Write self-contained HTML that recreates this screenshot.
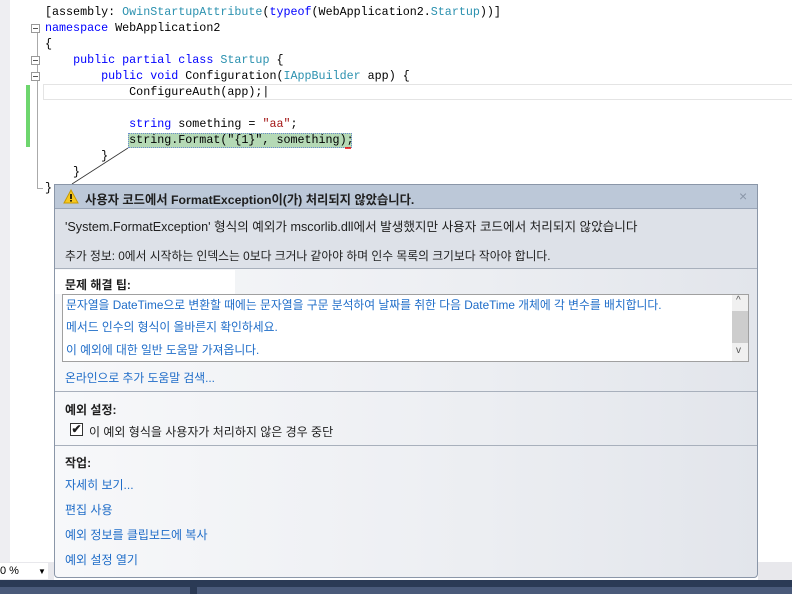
<!DOCTYPE html>
<html><head><meta charset="utf-8"><style>
*{margin:0;padding:0;box-sizing:border-box}
body{width:792px;height:594px;overflow:hidden;background:#fff;position:relative;font-family:"Liberation Sans","Noto Sans CJK KR",sans-serif}
.code{position:absolute;font-family:"Liberation Mono",monospace;font-size:11.7px;line-height:16px;white-space:pre;color:#000}
.k{color:#0000ff}.t{color:#2b91af}.s{color:#a31515}
.fold{position:absolute;width:9px;height:9px;border:1px solid #999;background:#fff;left:31px}
.fold:after{content:"";position:absolute;left:1px;top:3px;width:5px;height:1px;background:#555}
.dlg{position:absolute;left:54px;top:184px;width:704px;height:394px;border:1px solid #8a96a8;border-radius:0 0 4px 4px;background:linear-gradient(90deg,#f7f8fa,#eceef2 60%,#e2e5eb);font-size:12px;color:#1e1e1e}
.lnk{color:#1e6cc8}
.a{position:absolute}
</style></head><body>
<div class="a" style="left:0;top:0;width:10px;height:562px;background:#eeeef2"></div>
<div class="a" style="left:26px;top:85px;width:4px;height:62px;background:#6ed66e"></div>
<div class="a" style="left:37px;top:33px;width:1px;height:155px;background:#aaa"></div>
<div class="a" style="left:37px;top:188px;width:6px;height:1px;background:#aaa"></div>
<div class="fold" style="top:24px"></div>
<div class="fold" style="top:56px"></div>
<div class="fold" style="top:72px"></div>
<div class="a" style="left:43px;top:84px;width:760px;height:16px;border:1px solid #e4e4e4"></div>
<div class="a" style="left:128px;top:133px;width:224px;height:15px;background:#b5d9b5;border:1px dotted #6a8ad0"></div>
<svg class="a" style="left:0;top:0" width="792" height="200"><line x1="128" y1="148" x2="72" y2="184" stroke="#333" stroke-width="0.8"/><line x1="345" y1="148" x2="351" y2="148" stroke="#e00" stroke-width="1.5"/></svg>
<div class="code" style="left:45px;top:4px">[assembly: <span class="t">OwinStartupAttribute</span>(<span class="k">typeof</span>(WebApplication2.<span class="t">Startup</span>))]
<span class="k">namespace</span> WebApplication2
{
    <span class="k">public partial class</span> <span class="t">Startup</span> {
        <span class="k">public void</span> Configuration(<span class="t">IAppBuilder</span> app) {
            ConfigureAuth(app);|

            <span class="k">string</span> something = <span class="s">"aa"</span>;
            string.Format("{1}", something);
        }
    }
}</div>
<div class="dlg">
 <div class="a" style="left:0;top:0;width:702px;height:24px;background:#bcc8d8;border-bottom:1px solid #9aa6b8"></div>
 <svg class="a" style="left:8px;top:4px" width="16" height="15"><path d="M8 1 L15 14 L1 14 Z" fill="#f7c81e" stroke="#c89a00"/><rect x="7.2" y="5" width="1.6" height="5" fill="#000"/><rect x="7.2" y="11" width="1.6" height="1.6" fill="#000"/></svg>
 <div class="a" style="left:30px;top:5px;font-weight:bold;font-size:12.3px">사용자 코드에서 FormatException이(가) 처리되지 않았습니다.</div>
 <div class="a" style="left:684px;top:3px;color:#8a96a8;font-size:14px">×</div>
 <div class="a" style="left:0;top:24px;width:702px;height:60px;background:#dde1e8;border-bottom:1px solid #a8b0bc"></div>
 <div class="a" style="left:10px;top:31px;font-size:12.6px">'System.FormatException' 형식의 예외가 mscorlib.dll에서 발생했지만 사용자 코드에서 처리되지 않았습니다</div>
 <div class="a" style="left:10px;top:62px;font-size:11.8px">추가 정보: 0에서 시작하는 인덱스는 0보다 크거나 같아야 하며 인수 목록의 크기보다 작아야 합니다.</div>
 <div class="a" style="left:0;top:85px;width:180px;height:24px;background:#fff"></div>
 <div class="a" style="left:10px;top:91px;font-weight:bold">문제 해결 팁:</div>
 <div class="a" style="left:7px;top:109px;width:687px;height:68px;background:#fff;border:1px solid #a0a0a0"></div>
 <div class="a" style="left:677px;top:110px;width:16px;height:66px;background:#f0f0f0"></div>
 <div class="a" style="left:677px;top:126px;width:16px;height:32px;background:#cdcdcd"></div>
 <div class="a" style="left:681px;top:110px;font-size:10px;color:#555">^</div>
 <div class="a" style="left:681px;top:160px;font-size:10px;color:#555">v</div>
 <div class="a lnk" style="left:11px;top:111px;font-size:11.8px">문자열을 DateTime으로 변환할 때에는 문자열을 구문 분석하여 날짜를 취한 다음 DateTime 개체에 각 변수를 배치합니다.</div>
 <div class="a lnk" style="left:11px;top:133px;font-size:11.8px">메서드 인수의 형식이 올바른지 확인하세요.</div>
 <div class="a lnk" style="left:11px;top:156px;font-size:11.8px">이 예외에 대한 일반 도움말 가져옵니다.</div>
 <div class="a lnk" style="left:10px;top:184px;font-size:11.8px">온라인으로 추가 도움말 검색...</div>
 <div class="a" style="left:0;top:206px;width:702px;height:1px;background:#a8b0bc"></div>
 <div class="a" style="left:10px;top:216px;font-weight:bold">예외 설정:</div>
 <div class="a" style="left:15px;top:238px;width:13px;height:13px;border:1px solid #333;background:#fff;font-size:12px;line-height:11px;text-align:center;font-weight:bold">✔</div>
 <div class="a" style="left:34px;top:238px">이 예외 형식을 사용자가 처리하지 않은 경우 중단</div>
 <div class="a" style="left:0;top:260px;width:702px;height:1px;background:#a8b0bc"></div>
 <div class="a" style="left:10px;top:269px;font-weight:bold">작업:</div>
 <div class="a lnk" style="left:10px;top:291px">자세히 보기...</div>
 <div class="a lnk" style="left:10px;top:316px">편집 사용</div>
 <div class="a lnk" style="left:10px;top:341px">예외 정보를 클립보드에 복사</div>
 <div class="a lnk" style="left:10px;top:366px">예외 설정 열기</div>
</div>
<div class="a" style="left:0;top:562px;width:54px;height:18px;background:#e8e8ec"></div>
<div class="a" style="left:758px;top:562px;width:34px;height:18px;background:#e8e8ec"></div>
<div class="a" style="left:0;top:563px;width:48px;height:16px;background:#fff;font-size:11px;padding:2px 0 0 0">0 % <span style="position:absolute;left:38px;font-size:8px;top:4px">▼</span></div>
<div class="a" style="left:0;top:580px;width:792px;height:14px;background:#2b3a55"></div>
<div class="a" style="left:0;top:587px;width:190px;height:7px;background:#4a5a7a"></div>
<div class="a" style="left:197px;top:587px;width:595px;height:7px;background:#4a5a7a"></div>
</body></html>
